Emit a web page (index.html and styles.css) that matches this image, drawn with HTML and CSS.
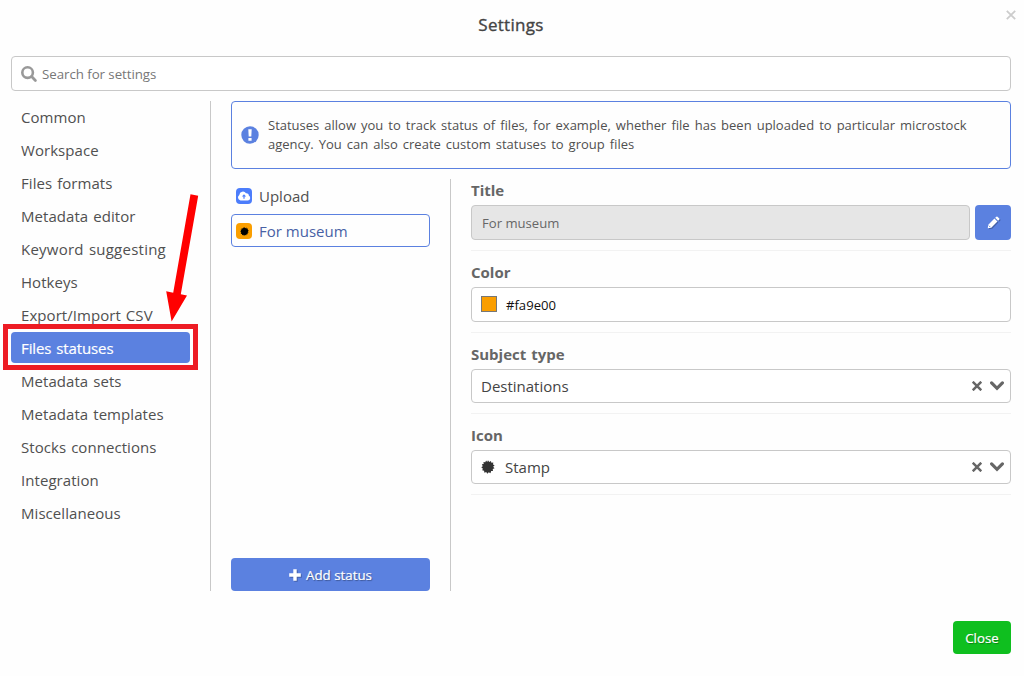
FILE: index.html
```html
<!DOCTYPE html>
<html lang="en">
<head>
<meta charset="utf-8">
<title>Settings</title>
<link rel="stylesheet" href="styles.css">
</head>
<body>
<svg class="defs" width="0" height="0" aria-hidden="true">
  <symbol id="stamp" viewBox="-8 -8 16 16">
    <path fill="currentColor" d="M0-7.8 1.4-5.8 3.3-7 3.9-4.8 6.1-5.2 5.7-3 7.6-2 5.9-.4 7.5 1.4 5.4 2.3 5.7 4.7 3.6 4.7 2.8 7 .9 5.9-.9 7.8-2 5.8-4.1 6.6-4.5 4.4-6.7 3.8-5.8 1.9-7.7.3-6-1-7-3.1-4.9-3.5-5.2-5.7-3.1-5.4-2.2-7.4-.9-5.8Z"/>
  </symbol>
  <symbol id="cross" viewBox="0 0 10 10">
    <path d="M1.6 1.6 8.4 8.4M8.4 1.6 1.6 8.4" fill="none" stroke="currentColor" stroke-width="2.5" stroke-linecap="square"/>
  </symbol>
  <symbol id="chevron" viewBox="0 0 14 10">
    <path d="M1.6 1.9 7 7.3 12.4 1.9" fill="none" stroke="currentColor" stroke-width="3.2" stroke-linecap="round"/>
  </symbol>
</svg>
<main class="dialog">
  <header class="dialog-header">
    <h1 class="dialog-title">Settings</h1>
    <svg class="dismiss" viewBox="0 0 10 10"><path d="M.8.8 9.2 9.2M9.2.8.8 9.2" fill="none" stroke="currentColor" stroke-width="1.8"/></svg>
  </header>
  <div class="search">
    <svg class="search-icon" viewBox="0 0 16 16"><circle cx="6.6" cy="6.6" r="5.3" fill="none" stroke="currentColor" stroke-width="2.6"/><path d="M10.6 10.6 14.4 14.4" stroke="currentColor" stroke-width="2.8" stroke-linecap="round"/></svg>
    <span class="search-text">Search for settings</span>
  </div>
  <div class="content">
    <nav class="sidebar">
      <a class="nav-item">Common</a>
      <a class="nav-item">Workspace</a>
      <a class="nav-item">Files formats</a>
      <a class="nav-item">Metadata editor</a>
      <a class="nav-item loose">Keyword suggesting</a>
      <a class="nav-item">Hotkeys</a>
      <a class="nav-item">Export/Import CSV</a>
      <a class="nav-item active">Files statuses</a>
      <a class="nav-item">Metadata sets</a>
      <a class="nav-item">Metadata templates</a>
      <a class="nav-item">Stocks connections</a>
      <a class="nav-item">Integration</a>
      <a class="nav-item">Miscellaneous</a>
    </nav>
    <section class="panel">
      <div class="alert">
        <svg class="alert-icon" viewBox="0 0 18 18"><circle cx="9" cy="9" r="8.7" fill="#5b81e0"/><path d="M7.3 3.2H10.7L10.3 10.6H7.7ZM7.4 12H10.6V14.7H7.4Z" fill="#fff"/></svg>
        <p class="alert-text">Statuses allow you to track status of files, for example, whether file has been uploaded to particular microstock<br>agency. You can also create custom statuses to group files</p>
      </div>
      <div class="columns">
        <div class="statuses">
          <div class="status">
            <span class="badge upload"><svg viewBox="0 0 14 12"><path fill="#fff" d="M3.5 10.5A3.1 3.1 0 0 1 2.3 4.9 3.7 3.7 0 0 1 9 3.2 2.3 2.3 0 0 1 11.8 5.6 2.6 2.6 0 0 1 10.8 10.5Z"/><path fill="#4c7dfb" d="M7 4.2 4.9 6.6H6.4V8.7H7.6V6.6H9.1Z"/></svg></span>
            <span>Upload</span>
          </div>
          <div class="status selected">
            <span class="badge museum"><svg viewBox="0 0 16 16"><use href="#stamp"/></svg></span>
            <span>For museum</span>
          </div>
          <button class="button add"><svg class="plus" viewBox="0 0 12 12"><path d="M6 .2V11.8M.2 6H11.8" stroke="#fff" stroke-width="3.4"/></svg><span>Add status</span></button>
        </div>
        <form class="form">
          <div class="field">
            <label class="label">Title</label>
            <div class="row">
              <div class="control disabled"><span>For museum</span></div>
              <button class="button edit" type="button"><svg viewBox="0 0 14 14"><path fill="#fff" d="M.8 13.2 1.4 9.4 8 2.8 11.2 6 4.6 12.6ZM8.8 2 10.1.7Q10.7.2 11.3.7L13.3 2.7Q13.8 3.3 13.3 3.9L12 5.2Z"/><path d="M2 10.4 3.6 12" stroke="#5b81e0" stroke-width="1"/></svg></button>
            </div>
          </div>
          <div class="field">
            <label class="label">Color</label>
            <div class="control color"><span class="swatch"></span><span class="hex">#fa9e00</span></div>
          </div>
          <div class="field">
            <label class="label">Subject type</label>
            <div class="control select"><span>Destinations</span><svg class="clear"><use href="#cross"/></svg><svg class="chevron"><use href="#chevron"/></svg></div>
          </div>
          <div class="field">
            <label class="label">Icon</label>
            <div class="control select"><svg class="stamp"><use href="#stamp"/></svg><span>Stamp</span><svg class="clear"><use href="#cross"/></svg><svg class="chevron"><use href="#chevron"/></svg></div>
          </div>
        </form>
      </div>
    </section>
  </div>
  <footer class="dialog-footer"><button class="button close"><span>Close</span></button></footer>
</main>
<div class="highlight"></div>
<svg class="arrow" viewBox="0 0 40 132"><path fill="#f00" d="M30.5 2.3 38.2 3.7 20.8 102.2 27 103.6 11.6 129.5 6.2 99.3 13.2 100.7Z"/></svg>
</body>
</html>
```
FILE: styles.css
```css
* { box-sizing: border-box; }
body {
  margin: 0;
  background: #fefefe;
  color: #505050;
  font-family: "Open Sans", "Noto Sans", sans-serif;
  font-size: 15px;
}
svg { display: block; flex: none; overflow: visible; }
.defs { position: absolute; }
.dialog { width: 1024px; height: 676px; padding: 0 13px 0 11px; overflow: hidden; }
.dialog-header { position: relative; height: 56px; }
.dialog-title { margin: 0; padding-top: 13px; font-size: 17px; line-height: 24px; font-weight: 500; letter-spacing: .3px; text-align: center; color: #444; -webkit-text-stroke: .35px #444; }
.dismiss { position: absolute; right: -5px; top: 10px; width: 10px; height: 10px; color: #ccc; }

.search {
  height: 35px;
  display: flex;
  align-items: center;
  padding-left: 9px;
  gap: 5px;
  border: 1px solid #c8c8c8;
  border-radius: 4px;
  background: #fff;
  color: #777;
  font-size: 13.3px;
}
.search-text { letter-spacing: -.05px; }
.search-icon { width: 16px; height: 16px; color: #999; }

.content { display: flex; height: 500px; padding-top: 10px; }
.sidebar {
  width: 200px;
  height: 490px;
  padding-right: 20px;
  border-right: 1px solid #c8c8c8;
  display: flex;
  flex-direction: column;
  gap: 2px;
}
.nav-item { height: 31px; padding: 1px 0 0 10px; line-height: 31px; border-radius: 4px; white-space: nowrap; letter-spacing: .06px; word-spacing: 1px; }
.nav-item.loose { letter-spacing: .24px; }
.nav-item.active { background: #5b81e0; color: #fff; letter-spacing: -.1px; -webkit-text-stroke: .2px #fff; }

.panel { flex: 1; padding-left: 20px; }
.alert {
  height: 68px;
  display: flex;
  align-items: center;
  gap: 9px;
  padding-left: 9px;
  border: 1px solid #5b81e0;
  border-radius: 4px;
}
.alert-icon { width: 18px; height: 18px; }
.alert-text { margin: 0; font-size: 13px; line-height: 19px; white-space: nowrap; word-spacing: 1.65px; }

.columns { display: flex; height: 412px; margin-top: 10px; }
.statuses { width: 220px; padding-right: 20px; border-right: 1px solid #c8c8c8; display: flex; flex-direction: column; gap: 2px; }
.status { height: 33px; display: flex; align-items: center; gap: 7px; padding-left: 4px; border: 1px solid transparent; border-radius: 4px; }
.status.selected { border-color: #5b81e0; color: #4861a5; }
.badge { width: 16px; height: 16px; margin-top: 1px; border-radius: 4px; display: flex; align-items: center; justify-content: center; }
.upload { background: #4c7dfb; }
.upload svg { width: 14px; height: 12px; }
.museum { background: #fa9e00; color: #000; }
.museum svg { width: 9px; height: 9px; }

.button {
  height: 33px;
  padding: 0;
  border: 0;
  border-radius: 4px;
  background: #5b81e0;
  color: #fff;
  font: 500 13.3px "Open Sans", sans-serif;
  display: flex;
  align-items: center;
  justify-content: center;
  text-shadow: 1px 1px 1px rgba(0, 0, 0, .35);
  -webkit-text-stroke: .2px #fff;
}
.button svg { filter: drop-shadow(1px 1px 0 rgba(0, 0, 0, .25)); }
.add { margin-top: auto; gap: 5px; }
.plus { width: 12px; height: 12px; }

.form { flex: 1; padding-left: 20px; }
.field { padding-bottom: 10px; margin-bottom: 10px; border-bottom: 1px solid #f2f2f2; }
.label { display: block; height: 26px; line-height: 23px; font-size: 15px; font-weight: 700; color: #666; word-spacing: 1px; }
.row { display: flex; gap: 5px; }
.control { height: 35px; display: flex; align-items: center; border: 1px solid #c8c8c8; border-radius: 4px; background: #fff; padding: 0 6px 0 9px; }
.disabled { flex: 1; padding-left: 10px; background: #e6e6e6; color: #666; font-size: 13.1px; }
.edit { width: 36px; height: 35px; }
.edit svg { width: 13px; height: 13px; }
.color { gap: 9px; font-size: 13.1px; color: #111; }
.swatch { width: 16px; height: 16px; margin-bottom: 1px; background: #fa9e00; border: 1px solid #777; }
.select { height: 34px; color: #444; }
.select .clear { width: 10px; height: 10px; margin-left: auto; margin-right: 8px; color: #666; }
.select .chevron { width: 14px; height: 10px; color: #666; }
.stamp { width: 14px; height: 14px; margin-right: 10px; color: #333; }

.dialog-footer { display: flex; justify-content: flex-end; padding-top: 30px; }
.close { width: 58px; background: #0fbf1f; }

.highlight { position: absolute; left: 3px; top: 324px; width: 195px; height: 46px; border: 5px solid #ed1c24; }
.arrow { position: absolute; left: 160px; top: 192px; width: 40px; height: 132px; }
```
